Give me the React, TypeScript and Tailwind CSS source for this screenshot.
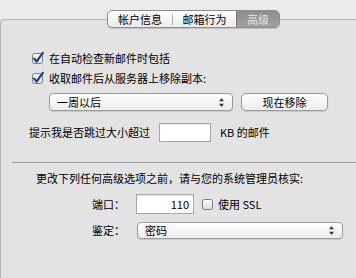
import React from "react";

const font = { fontFamily: '"Noto Sans CJK SC", "Noto Sans", sans-serif' };

const CheckBox = ({ checked }: { checked?: boolean }) => (
  <svg width="13" height="13" viewBox="0 0 13 13" className="shrink-0 overflow-visible">
    <defs>
      <linearGradient id="cbg" x1="0" y1="0" x2="0" y2="1">
        <stop offset="0" stopColor="#ffffff" />
        <stop offset="1" stopColor="#dcdcdc" />
      </linearGradient>
    </defs>
    <rect x="1.5" y="1.5" width="10" height="10" rx="2" fill="url(#cbg)" stroke="#7c7c7c" />
    {checked && (
      <path
        d="M3.2 6.6 L5.6 9.6 L11.8 0.8"
        fill="none"
        stroke="#1c3f86"
        strokeWidth="2.2"
        strokeLinecap="round"
        strokeLinejoin="round"
      />
    )}
  </svg>
);

const Arrows = () => (
  <svg width="7" height="11" viewBox="0 0 7 11" className="shrink-0">
    <path d="M3.5 1 L6 4.2 L1 4.2 Z" fill="#3a3a3a" />
    <path d="M3.5 10 L6 6.8 L1 6.8 Z" fill="#3a3a3a" />
  </svg>
);

const Popup = ({ label, className }: { label: string; className: string }) => (
  <div
    className={`flex items-center justify-between rounded-[4px] border border-[#9a9a9a] bg-gradient-to-b from-[#ffffff] to-[#ececec] pl-[7px] pr-[7px] shadow-[0_1px_1px_rgba(0,0,0,0.12)] ${className}`}
  >
    <span className="text-[11px] leading-none text-black">{label}</span>
    <Arrows />
  </div>
);

export default function App() {
  return (
    <div className="relative h-[278px] w-[356px] overflow-hidden bg-[#ebebeb]" style={font}>
      <div className="ml-[0px] mt-[19px] h-[300px] w-[420px] rounded-tl-[4px] border-l border-t border-[#b3b3b3] bg-[#e3e3e3]">
        <div className="pt-[28px]">
          <div className="flex h-[20px] items-center gap-[5px] pl-[30px]">
            <CheckBox checked />
            <span className="text-[11px] leading-none text-black">在自动检查新邮件时包括</span>
          </div>
          <div className="flex h-[20px] items-center gap-[5px] pl-[30px]">
            <CheckBox checked />
            <span className="text-[11px] leading-none text-black">收取邮件后从服务器上移除副本:</span>
          </div>
          <div className="mt-[5px] flex items-center pl-[48px]">
            <Popup label="一周以后" className="h-[18px] w-[184px]" />
            <div className="ml-[8px] flex h-[18px] w-[87px] items-center justify-center rounded-[5px] border border-[#9a9a9a] bg-gradient-to-b from-[#ffffff] to-[#ececec] shadow-[0_1px_1px_rgba(0,0,0,0.12)]">
              <span className="text-[11px] leading-none text-black">现在移除</span>
            </div>
          </div>
          <div className="mt-[12px] flex items-center pl-[28px]">
            <span className="text-[11px] leading-none text-black">提示我是否跳过大小超过</span>
            <div className="ml-[9px] h-[19px] w-[52px] border border-[#a8a8a8] bg-white shadow-[inset_0_1px_1px_rgba(0,0,0,0.1)]" />
            <span className="ml-[9px] text-[11px] leading-none text-black">KB 的邮件</span>
          </div>
          <div className="ml-[11px] mt-[20px] h-px bg-[#9c9c9c]" />
          <div className="mt-[8px] flex h-[14px] items-center pl-[35px]">
            <span className="text-[11px] leading-none text-black">更改下列任何高级选项之前，请与您的系统管理员核实:</span>
          </div>
          <div className="mt-[9px] flex items-center">
            <span className="w-[124px] text-right text-[11px] leading-none text-black">端口：</span>
            <div className="ml-[11px] flex h-[20px] w-[58px] items-center justify-end border border-[#a8a8a8] bg-white pr-[4px] shadow-[inset_0_1px_1px_rgba(0,0,0,0.1)]">
              <span className="text-[11px] leading-none text-black">110</span>
            </div>
            <div className="ml-[7px] flex items-center gap-[4px]">
              <CheckBox />
              <span className="text-[11px] leading-none text-black">使用 SSL</span>
            </div>
          </div>
          <div className="mt-[8px] flex items-center">
            <span className="w-[124px] text-right text-[11px] leading-none text-black">鉴定：</span>
            <Popup label="密码" className="ml-[12px] h-[17px] w-[206px]" />
          </div>
        </div>
      </div>

      {/* segmented tab control sits across the panel's top border */}
      <div className="absolute left-[107px] top-[10px] flex h-[18px] overflow-hidden rounded-[5px] border border-[#8c8c8c] bg-gradient-to-b from-[#ffffff] to-[#ebebeb] shadow-[0_1px_1px_rgba(0,0,0,0.15)]">
        <div className="flex w-[64px] items-center justify-center">
          <span className="text-[11px] leading-none text-black">帐户信息</span>
        </div>
        <div className="my-auto h-[11px] w-px bg-[#b0b0b0]" />
        <div className="flex w-[63px] items-center justify-center">
          <span className="text-[11px] leading-none text-black">邮箱行为</span>
        </div>
        <div className="flex w-[43px] items-center justify-center border-l border-[#7a7a7a] bg-gradient-to-b from-[#8e8e8e] to-[#a0a0a0]">
          <span className="text-[11px] leading-none text-[#e4e4e4]">高级</span>
        </div>
      </div>
    </div>
  );
}
